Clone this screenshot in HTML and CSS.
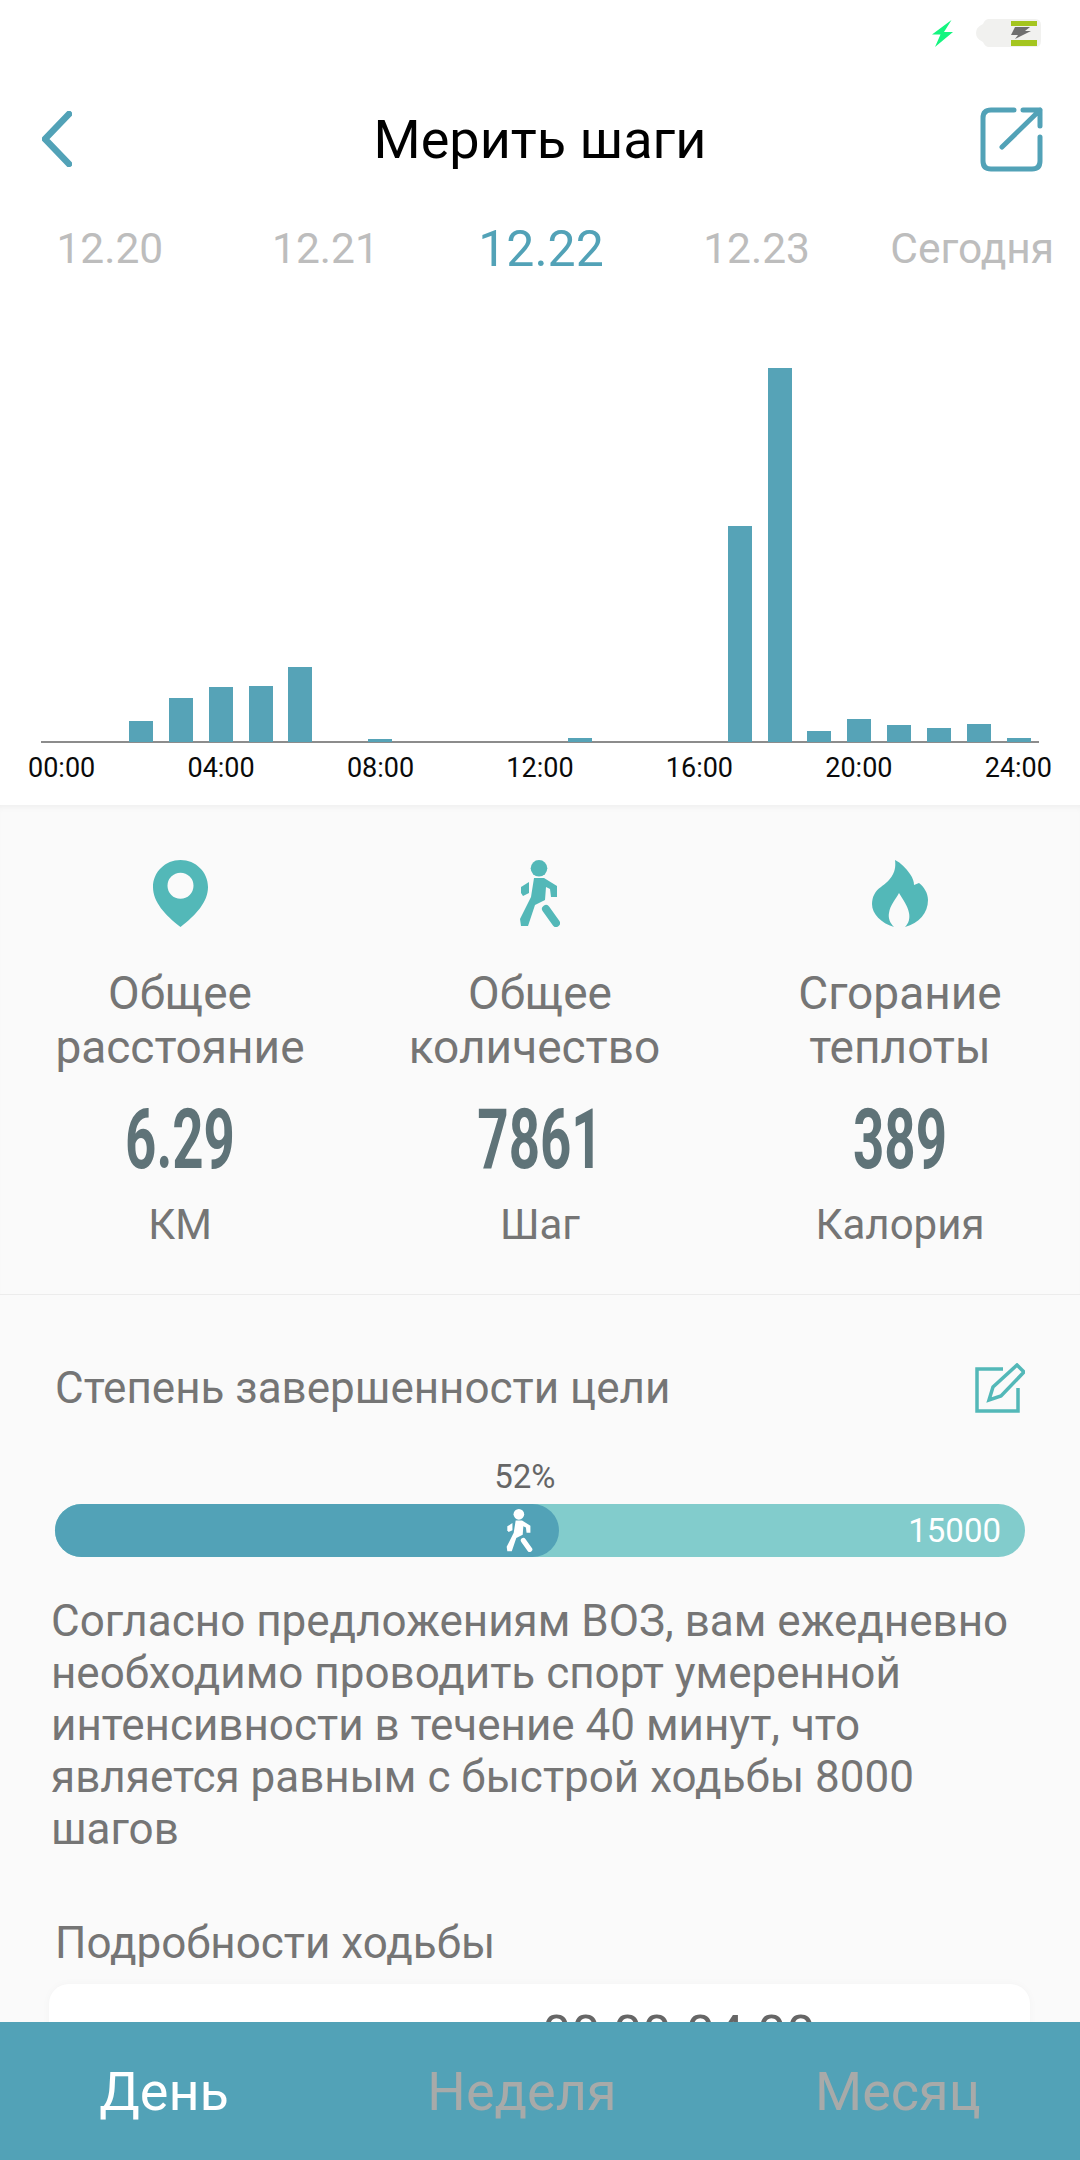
FILE: index.html
```html
<!DOCTYPE html>
<html lang="ru">
<head>
    <meta charset="UTF-8">
    <meta name="viewport" content="width=device-width, initial-scale=1.0">
    <title>Мерить шаги</title>
    <link rel="stylesheet" href="styles.css">
</head>
<body>
    <div class="page">
        <div class="content">
            <section class="top">
                <div class="status">
                    <svg class="status-bolt" viewBox="0 0 21 27"><path d="M19.5 0 0 14.5h8.5L3 27l18-15h-9z"/></svg>
                    <svg class="status-battery" viewBox="0 0 65 28">
                        <path class="battery-body" d="M13 0h46q6 0 6 6v16q0 6-6 6H13Q9 28 7 23 0 20 0 14T7 5q2-5 6-5z"/>
                        <rect class="battery-level" x="35" y="2" width="26" height="5"/>
                        <rect class="battery-level" x="35" y="21" width="26" height="6"/>
                        <path class="battery-bolt" d="M39 8h15l-5 4h6L39 20l3-4h-7z"/>
                    </svg>
                </div>

                <header class="header">
                    <svg class="back" viewBox="0 0 30 56"><path d="M27 3 3 28l24 25"/></svg>
                    <h1>Мерить шаги</h1>
                    <svg class="share" viewBox="0 0 63 65"><path d="M34 3H11Q3 3 3 11v43q0 8 8 8h41q8 0 8-8V30M22 40 60 3M43 3h17v16"/></svg>
                </header>

                <div class="dates">
                    <span>12.20</span>
                    <span>12.21</span>
                    <span class="active">12.22</span>
                    <span>12.23</span>
                    <span>Сегодня</span>
                </div>

                <div class="chart">
                    <div class="slot"></div>
                    <div class="slot"></div>
                    <div class="slot"><i style="height: 21px"></i></div>
                    <div class="slot"><i style="height: 44px"></i></div>
                    <div class="slot"><i style="height: 55px"></i></div>
                    <div class="slot"><i style="height: 56px"></i></div>
                    <div class="slot"><i style="height: 75px"></i></div>
                    <div class="slot"></div>
                    <div class="slot"><i style="height: 3px"></i></div>
                    <div class="slot"></div>
                    <div class="slot"></div>
                    <div class="slot"></div>
                    <div class="slot"></div>
                    <div class="slot"><i style="height: 4px"></i></div>
                    <div class="slot"></div>
                    <div class="slot"></div>
                    <div class="slot"></div>
                    <div class="slot"><i style="height: 216px"></i></div>
                    <div class="slot"><i style="height: 374px"></i></div>
                    <div class="slot"><i style="height: 11px"></i></div>
                    <div class="slot"><i style="height: 23px"></i></div>
                    <div class="slot"><i style="height: 17px"></i></div>
                    <div class="slot"><i style="height: 14px"></i></div>
                    <div class="slot"><i style="height: 18px"></i></div>
                    <div class="slot"><i style="height: 4px"></i></div>
                </div>
                <div class="hours">
                    <span>00:00</span>
                    <span>04:00</span>
                    <span>08:00</span>
                    <span>12:00</span>
                    <span>16:00</span>
                    <span>20:00</span>
                    <span>24:00</span>
                </div>
            </section>

            <section class="stats">
                <div class="stat">
                    <svg class="stat-icon" width="55" height="67" viewBox="0 0 55 67"><path fill-rule="evenodd" d="M27.5 0C42.7 0 55 12 55 27c0 15-12 28-27.5 40C12 55 0 42 0 27 0 12 12.300 0 27.500 0zm0 12.700a13 13 0 1 0 0 26 13 13 0 0 0 0-26z"/></svg>
                    <div class="stat-label">Общее<br>расстояние</div>
                    <div class="stat-value">6.29</div>
                    <div class="stat-unit">КМ</div>
                </div>
                <div class="stat">
                    <svg class="stat-icon" width="40" height="67" viewBox="0 0 40 67">
                        <circle cx="19" cy="8.300" r="8.300"/>
                        <path d="M14 18h10l13 8v11h-6l-1-8-4-2-1 13-10 5-7 21H1l-1-7 11-22z"/>
                        <path d="M9 22v11l-6 3-2-3v-6z"/>
                        <path class="walker-leg" d="m26 49 10 14"/>
                    </svg>
                    <div class="stat-label">Общее<br><span class="nudge">количество</span></div>
                    <div class="stat-value">7861</div>
                    <div class="stat-unit">Шаг</div>
                </div>
                <div class="stat">
                    <svg class="stat-icon" width="56" height="67" viewBox="0 0 56 67"><path d="M23 0c6 3 11 8 15 14 3 4 4 8 4 11l5-2c5 4 9 10 9 17 0 13-9 23-23 27 4-4 5-9 4-14-1-7-6-13-10-20-3 6-9 12-10 20-1 5 1 10 5 14C9 63 0 54 0 44c0-7 3-13 9-17 8-6 16-13 14-27z"/></svg>
                    <div class="stat-label">Сгорание<br>теплоты</div>
                    <div class="stat-value">389</div>
                    <div class="stat-unit">Калория</div>
                </div>
            </section>

            <section class="goal">
                <div class="goal-head">
                    <h2>Степень завершенности цели</h2>
                    <svg class="edit" viewBox="0 0 50 50"><path d="M28 6H2v42h41V25M14 37l4-13L42 2l7 7-23 24z"/></svg>
                </div>
                <div class="percent" style="width: 52%">52%</div>
                <div class="track">
                    <div class="fill" style="width: 52%">
                        <svg class="fill-walker" width="27" height="43" viewBox="0 0 40 67">
                            <circle cx="19" cy="8.300" r="8.300"/>
                            <path d="M14 18h10l13 8v11h-6l-1-8-4-2-1 13-10 5-7 21H1l-1-7 11-22z"/>
                            <path d="M9 22v11l-6 3-2-3v-6z"/>
                            <path class="walker-leg" d="m26 49 10 14"/>
                        </svg>
                    </div>
                    <span class="target">15000</span>
                </div>
                <p class="advice">Согласно предложениям ВОЗ, вам ежедневно необходимо проводить спорт умеренной интенсивности в течение 40 минут, что является равным с быстрой ходьбы 8000 шагов</p>
                <h2 class="details-title">Подробности ходьбы</h2>
                <div class="card">00:00-04:00</div>
            </section>
        </div>

        <nav class="tabs">
            <span class="active">День</span>
            <span>Неделя</span>
            <span>Месяц</span>
        </nav>
    </div>
</body>
</html>
```

FILE: styles.css
```css
* {
    box-sizing: border-box;
}

body {
    margin: 0;
    font-family: Roboto, "Noto Sans", sans-serif;
    color: #757575;
}

.page {
    width: 1080px;
    height: 2160px;
    display: flex;
    flex-direction: column;
    overflow: hidden;
    background: #fafafa;
}

.content {
    flex: 1;
    overflow: hidden;
}

.top {
    height: 805px;
    background: #fff;
}

.status {
    height: 80px;
    padding: 19px 39px 0 0;
    display: flex;
    justify-content: flex-end;
    align-items: flex-start;
    gap: 23px;
}

.status-bolt {
    width: 21px;
    height: 27px;
    margin-top: 1px;
    fill: #14f57f;
}

.status-battery {
    width: 65px;
    height: 28px;
}

.battery-body {
    fill: #f1f1ef;
}

.battery-level {
    fill: #a4c51f;
}

.battery-bolt {
    fill: #6f6f6f;
}

.header {
    height: 120px;
    padding: 0 37px 2px;
    display: grid;
    grid-template-columns: 1fr auto 1fr;
    align-items: center;
}

.header h1 {
    margin: 0;
    font-size: 54px;
    font-weight: 400;
    color: #000;
}

.back {
    width: 30px;
    height: 56px;
    margin-left: 5px;
    fill: none;
    stroke: #52a2b7;
    stroke-width: 6.500;
    stroke-linecap: round;
    stroke-linejoin: round;
}

.share {
    width: 63px;
    height: 65px;
    justify-self: end;
    fill: none;
    stroke: #52a2b7;
    stroke-width: 5;
    stroke-linecap: round;
    stroke-linejoin: round;
}

.dates {
    height: 97px;
    padding-left: 2px;
    display: grid;
    grid-template-columns: repeat(5, 1fr);
    align-items: center;
    text-align: center;
    font-size: 42.500px;
    color: #bdbdbd;
}

.dates .active {
    font-size: 50px;
    color: #52a2b7;
}

.chart {
    width: 998px;
    height: 446px;
    margin-left: 41px;
    display: flex;
    align-items: flex-end;
    border-bottom: 2px solid #8c8c8c;
}

.slot {
    flex: 1;
    display: flex;
    justify-content: center;
    margin-bottom: -1px;
}

.slot i {
    display: block;
    width: 24px;
    background: #56a3b7;
}

.hours {
    padding: 9px 28px 0;
    display: flex;
    justify-content: space-between;
    font-size: 27px;
    line-height: 32px;
    color: #0a0a0a;
}

.stats {
    height: 490px;
    padding-top: 55px;
    display: grid;
    grid-template-columns: repeat(3, 1fr);
    text-align: center;
    border-bottom: 1px solid #ececec;
    box-shadow: inset 0 6px 6px -4px rgba(0, 0, 0, 0.05);
}

.stat-icon {
    display: block;
    margin: 0 auto;
    fill: #53b8b8;
}

.walker-leg {
    fill: none;
    stroke: #53b8b8;
    stroke-width: 8;
    stroke-linecap: round;
}

.stat-label {
    margin-top: 39px;
    font-size: 46px;
    line-height: 54px;
}

.nudge {
    padding-right: 11px;
}

.stat-value {
    height: 84px;
    margin-top: 24px;
    font-size: 84px;
    line-height: 84px;
    font-weight: 700;
    color: #5f7378;
    transform: scaleX(0.65);
}

.stat-unit {
    margin-top: 16px;
    font-size: 42px;
    line-height: 54px;
}

.goal {
    padding: 66px 55px 0;
}

.goal-head {
    display: flex;
    justify-content: space-between;
    align-items: center;
}

.goal h2 {
    margin: 0;
    font-size: 44px;
    font-weight: 400;
    line-height: 54px;
}

.edit {
    width: 50px;
    height: 50px;
    fill: none;
    stroke: #53b8b8;
    stroke-width: 3.500;
}

.percent {
    margin-top: 42px;
    padding-right: 4px;
    text-align: right;
    font-size: 33px;
    line-height: 40px;
    color: #666;
}

.track {
    height: 53px;
    margin-top: 7px;
    display: flex;
    align-items: center;
    background: #82cccc;
    border-radius: 27px;
}

.fill {
    height: 100%;
    padding-right: 26px;
    display: flex;
    justify-content: flex-end;
    align-items: center;
    background: #52a2b7;
    border-radius: 27px;
}

.fill-walker {
    fill: #fff;
}

.fill-walker .walker-leg {
    stroke: #fff;
}

.target {
    margin-left: auto;
    padding-right: 24px;
    font-size: 33px;
    color: #fff;
}

.advice {
    margin: 38px -10px 0 -4px;
    font-size: 44px;
    line-height: 52px;
}

.goal .details-title {
    margin-top: 61px;
}

.card {
    height: 120px;
    margin: 14px -5px 0 -6px;
    padding: 26px 0 0 493px;
    font-size: 52px;
    line-height: 50px;
    color: #666;
    background: #fff;
    border-radius: 20px;
    box-shadow: 0 0 8px rgba(0, 0, 0, 0.03);
}

.tabs {
    height: 138px;
    flex-shrink: 0;
    display: flex;
    justify-content: space-around;
    align-items: center;
    font-size: 54px;
    color: #a8aaa9;
    background: #52a2b7;
}

.tabs .active {
    color: #fff;
}
```
